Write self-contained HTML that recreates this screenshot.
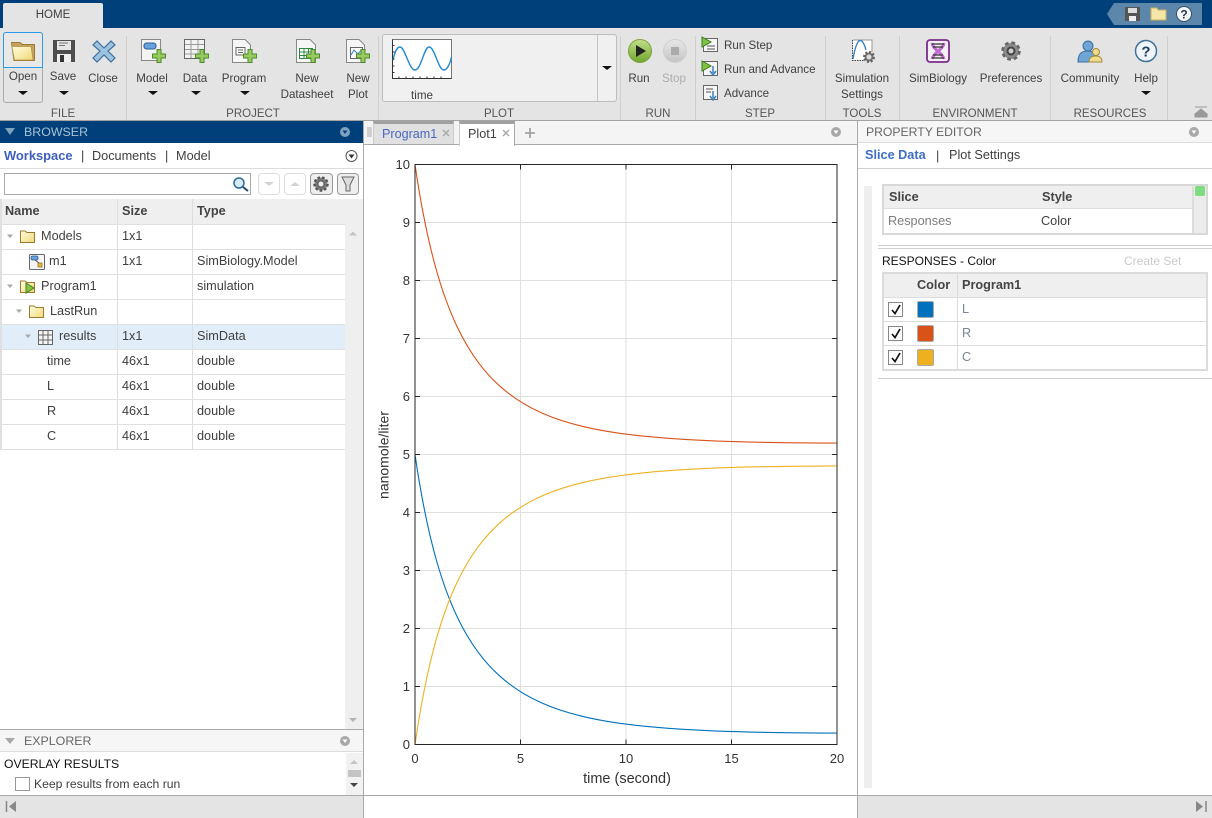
<!DOCTYPE html>
<html><head><meta charset="utf-8"><style>
html,body{margin:0;padding:0;background:#fff}
#p{position:relative;width:1212px;height:818px;overflow:hidden;font-family:"Liberation Sans",sans-serif;font-size:12px;color:#404040;background:#fff}
.b{position:absolute;box-sizing:border-box}
.t{position:absolute;white-space:nowrap;line-height:14px;font-size:11.6px}
.c{transform:translateX(-50%)}
.m{font-size:12.7px}
.h{font-size:12.7px;font-weight:bold;color:#444}
.s{font-size:11.5px;color:#555}
svg{position:absolute;left:0;top:0}
</style></head><body><div id="p">

<div class="b" style="left:0;top:0;width:1212px;height:28px;background:#00407a"></div>
<div class="b" style="left:3px;top:3px;width:100px;height:25px;background:#e4e4e4;border-radius:2px 2px 0 0"></div>
<div class="t c" style="left:53px;top:8px;font-size:11.5px">HOME</div>
<div class="b" style="left:0;top:28px;width:1212px;height:92px;background:#e4e4e4"></div>
<div class="b" style="left:0;top:120px;width:1212px;height:1px;background:#a3a3a3"></div>

<div class="b" style="left:3px;top:32px;width:40px;height:71px;border:1px solid #aaa;border-radius:3px"></div>
<div class="b" style="left:3px;top:32px;width:40px;height:36px;border:1px solid #2a9be8;border-radius:3px 3px 0 0;background:#e8e8e8"></div>
<div class="b" style="left:382px;top:34px;width:235px;height:68px;background:#f0f0f0;border:1px solid #bdbdbd;border-radius:3px"></div>
<div class="b" style="left:597px;top:35px;width:1px;height:66px;background:#c4c4c4"></div>

<div class="b" style="left:126px;top:36px;width:1px;height:84px;background:#cfcfcf"></div>
<div class="b" style="left:378px;top:36px;width:1px;height:84px;background:#cfcfcf"></div>
<div class="b" style="left:620px;top:36px;width:1px;height:84px;background:#cfcfcf"></div>
<div class="b" style="left:695px;top:36px;width:1px;height:84px;background:#cfcfcf"></div>
<div class="b" style="left:825px;top:36px;width:1px;height:84px;background:#cfcfcf"></div>
<div class="b" style="left:899px;top:36px;width:1px;height:84px;background:#cfcfcf"></div>
<div class="b" style="left:1050px;top:36px;width:1px;height:84px;background:#cfcfcf"></div>
<div class="b" style="left:1167px;top:36px;width:1px;height:84px;background:#cfcfcf"></div>

<div class="t c" style="left:23px;top:70px">Open</div>
<div class="t c" style="left:63px;top:70px">Save</div>
<div class="t c" style="left:103px;top:72px">Close</div>
<div class="t c" style="left:152px;top:72px">Model</div>
<div class="t c" style="left:195px;top:72px">Data</div>
<div class="t c" style="left:244px;top:72px">Program</div>
<div class="t c" style="left:307px;top:72px">New</div>
<div class="t c" style="left:307px;top:88px">Datasheet</div>
<div class="t c" style="left:358px;top:72px">New</div>
<div class="t c" style="left:358px;top:88px">Plot</div>
<div class="t c" style="left:422px;top:89px">time</div>
<div class="t c" style="left:639px;top:72px">Run</div>
<div class="t c" style="left:674px;top:72px;color:#adadad">Stop</div>
<div class="t" style="left:724px;top:39px">Run Step</div>
<div class="t" style="left:724px;top:63px">Run and Advance</div>
<div class="t" style="left:724px;top:87px">Advance</div>
<div class="t c" style="left:862px;top:72px">Simulation</div>
<div class="t c" style="left:862px;top:88px">Settings</div>
<div class="t c" style="left:938px;top:72px">SimBiology</div>
<div class="t c" style="left:1011px;top:72px">Preferences</div>
<div class="t c" style="left:1090px;top:72px">Community</div>
<div class="t c" style="left:1146px;top:72px">Help</div>

<div class="t c s" style="left:63px;top:107px">FILE</div>
<div class="t c s" style="left:253px;top:107px">PROJECT</div>
<div class="t c s" style="left:499px;top:107px">PLOT</div>
<div class="t c s" style="left:658px;top:107px">RUN</div>
<div class="t c s" style="left:760px;top:107px">STEP</div>
<div class="t c s" style="left:862px;top:107px">TOOLS</div>
<div class="t c s" style="left:975px;top:107px">ENVIRONMENT</div>
<div class="t c s" style="left:1110px;top:107px">RESOURCES</div>

<div class="b" style="left:0;top:121px;width:363px;height:22px;background:#00407a"></div>
<div class="t" style="left:24px;top:125px;color:#a8c2d6;font-size:12.4px">BROWSER</div>
<div class="t m" style="left:4px;top:149px;font-weight:bold;color:#3f5fbf;font-size:12.9px">Workspace</div>
<div class="t m" style="left:81px;top:149px">|</div>
<div class="t m" style="left:92px;top:149px">Documents</div>
<div class="t m" style="left:165px;top:149px">|</div>
<div class="t m" style="left:176px;top:149px">Model</div>
<div class="b" style="left:0;top:168px;width:363px;height:1px;background:#dcdcdc"></div>
<div class="b" style="left:4px;top:173px;width:247px;height:22px;border:1px solid #aaa;background:#fff"></div>
<div class="b" style="left:258px;top:173px;width:22px;height:22px;border:1px solid #ddd;border-radius:4px"></div>
<div class="b" style="left:284px;top:173px;width:22px;height:22px;border:1px solid #ddd;border-radius:4px"></div>
<div class="b" style="left:310px;top:173px;width:23px;height:22px;border:1px solid #999;border-radius:4px;background:#eee"></div>
<div class="b" style="left:337px;top:173px;width:22px;height:22px;border:1px solid #999;border-radius:4px;background:#eee"></div>

<div class="b" style="left:345px;top:199px;width:18px;height:530px;background:#efefef"></div>
<div class="b" style="left:1px;top:199px;width:344px;height:25px;background:#efefef"></div>
<div class="b" style="left:1px;top:325px;width:344px;height:24px;background:#e1eefa"></div>
<div class="b" style="left:0;top:199px;width:2px;height:251px;background:#e0e0e0"></div>
<div class="b" style="left:117px;top:199px;width:1px;height:251px;background:#dedede"></div>
<div class="b" style="left:192px;top:199px;width:1px;height:251px;background:#dedede"></div>
<div class="b" style="left:1px;top:224px;width:344px;height:1px;background:#e0e0e0"></div>
<div class="b" style="left:1px;top:249px;width:344px;height:1px;background:#e0e0e0"></div>
<div class="b" style="left:1px;top:274px;width:344px;height:1px;background:#e0e0e0"></div>
<div class="b" style="left:1px;top:299px;width:344px;height:1px;background:#e0e0e0"></div>
<div class="b" style="left:1px;top:324px;width:344px;height:1px;background:#e0e0e0"></div>
<div class="b" style="left:1px;top:349px;width:344px;height:1px;background:#e0e0e0"></div>
<div class="b" style="left:1px;top:374px;width:344px;height:1px;background:#e0e0e0"></div>
<div class="b" style="left:1px;top:399px;width:344px;height:1px;background:#e0e0e0"></div>
<div class="b" style="left:1px;top:424px;width:344px;height:1px;background:#e0e0e0"></div>
<div class="b" style="left:1px;top:449px;width:344px;height:1px;background:#e0e0e0"></div>

<div class="t h" style="left:5px;top:204px">Name</div>
<div class="t h" style="left:122px;top:204px">Size</div>
<div class="t h" style="left:197px;top:204px">Type</div>
<div class="t m" style="left:41px;top:229px">Models</div><div class="t m" style="left:122px;top:229px">1x1</div>
<div class="t m" style="left:49px;top:254px">m1</div><div class="t m" style="left:122px;top:254px">1x1</div><div class="t m" style="left:197px;top:254px">SimBiology.Model</div>
<div class="t m" style="left:41px;top:279px">Program1</div><div class="t m" style="left:197px;top:279px">simulation</div>
<div class="t m" style="left:50px;top:304px">LastRun</div>
<div class="t m" style="left:59px;top:329px">results</div><div class="t m" style="left:122px;top:329px">1x1</div><div class="t m" style="left:197px;top:329px">SimData</div>
<div class="t m" style="left:47px;top:354px">time</div><div class="t m" style="left:122px;top:354px">46x1</div><div class="t m" style="left:197px;top:354px">double</div>
<div class="t m" style="left:47px;top:379px">L</div><div class="t m" style="left:122px;top:379px">46x1</div><div class="t m" style="left:197px;top:379px">double</div>
<div class="t m" style="left:47px;top:404px">R</div><div class="t m" style="left:122px;top:404px">46x1</div><div class="t m" style="left:197px;top:404px">double</div>
<div class="t m" style="left:47px;top:429px">C</div><div class="t m" style="left:122px;top:429px">46x1</div><div class="t m" style="left:197px;top:429px">double</div>

<div class="b" style="left:0;top:729px;width:363px;height:1px;background:#aaa"></div>
<div class="b" style="left:0;top:730px;width:363px;height:22px;background:#f6f6f6;border-bottom:1px solid #dcdcdc"></div>
<div class="t" style="left:24px;top:734px;color:#666;font-size:12.4px">EXPLORER</div>
<div class="t" style="left:4px;top:757px;color:#111;font-size:12.2px">OVERLAY RESULTS</div>
<div class="b" style="left:15px;top:777px;width:15px;height:14px;border:1px solid #999;background:#fff"></div>
<div class="t" style="left:34px;top:777px;font-size:12.2px">Keep results from each run</div>
<div class="b" style="left:346px;top:753px;width:17px;height:42px;background:#f2f2f2"></div>
<div class="b" style="left:348px;top:770px;width:13px;height:7px;background:#c4c4c4"></div>

<div class="b" style="left:0;top:795px;width:1212px;height:1px;background:#aaa"></div>
<div class="b" style="left:0;top:796px;width:363px;height:22px;background:#e4e4e4"></div>
<div class="b" style="left:858px;top:796px;width:354px;height:22px;background:#e4e4e4"></div>
<div class="b" style="left:363px;top:121px;width:1px;height:697px;background:#aaa"></div>
<div class="b" style="left:857px;top:121px;width:1px;height:697px;background:#aaa"></div>

<div class="b" style="left:364px;top:121px;width:493px;height:24px;background:#f4f4f4"></div>
<div class="b" style="left:373px;top:121px;width:81px;height:24px;background:#e0e0e0;border-top:3px solid #a0a0a0;border-left:1px solid #ccc;border-right:1px solid #ccc"></div>
<div class="b" style="left:364px;top:144px;width:493px;height:1px;background:#aaa"></div>
<div class="b" style="left:459px;top:121px;width:56px;height:25px;background:#fff;border-top:3px solid #a0a0a0;border-left:1px solid #ccc;border-right:1px solid #aaa"></div>
<div class="t" style="left:382px;top:127px;color:#4a66c4;font-size:12.6px">Program1</div>
<div class="t" style="left:468px;top:127px;font-size:12.6px">Plot1</div>

<div class="b" style="left:858px;top:121px;width:354px;height:22px;background:#f6f6f6;border-bottom:1px solid #dcdcdc"></div>
<div class="t" style="left:866px;top:125px;color:#666;font-size:12.2px">PROPERTY EDITOR</div>
<div class="t m" style="left:865px;top:148px;font-weight:bold;color:#3f6fc4">Slice Data</div>
<div class="t m" style="left:936px;top:149px">|</div>
<div class="t m" style="left:949px;top:148px">Plot Settings</div>
<div class="b" style="left:858px;top:168px;width:354px;height:1px;background:#cfcfcf"></div>
<div class="b" style="left:864px;top:186px;width:8px;height:602px;background:#eeeeee"></div>

<div class="b" style="left:882px;top:184px;width:326px;height:51px;border:2px solid #d8d8d8;background:#fff"></div>
<div class="b" style="left:884px;top:186px;width:308px;height:23px;background:#efefef;border-bottom:1px solid #ddd"></div>
<div class="b" style="left:1192px;top:186px;width:14px;height:47px;background:#ececec;border-left:2px solid #ddd"></div>
<div class="b" style="left:1195px;top:186px;width:10px;height:10px;background:#7fdc7f;border-radius:2px"></div>
<div class="t h" style="left:889px;top:190px">Slice</div>
<div class="t h" style="left:1042px;top:190px">Style</div>
<div class="t m" style="left:888px;top:214px;color:#7d7d7d">Responses</div>
<div class="t m" style="left:1041px;top:214px">Color</div>

<div class="b" style="left:878px;top:245px;width:334px;height:1px;background:#cfcfcf"></div>
<div class="b" style="left:878px;top:248px;width:334px;height:1px;background:#cfcfcf"></div>
<div class="t" style="left:882px;top:254px;color:#111;font-size:12px">RESPONSES - Color</div>
<div class="t" style="left:1124px;top:254px;color:#cbcbcb;font-size:12px">Create Set</div>

<div class="b" style="left:882px;top:272px;width:326px;height:99px;border:2px solid #dcdcdc;background:#fff"></div>
<div class="b" style="left:884px;top:274px;width:322px;height:24px;background:#efefef"></div>
<div class="b" style="left:884px;top:297px;width:322px;height:1px;background:#ddd"></div>
<div class="b" style="left:884px;top:321px;width:322px;height:1px;background:#ddd"></div>
<div class="b" style="left:884px;top:345px;width:322px;height:1px;background:#ddd"></div>
<div class="b" style="left:957px;top:274px;width:1px;height:95px;background:#ddd"></div>
<div class="t h" style="left:917px;top:278px">Color</div>
<div class="t h" style="left:962px;top:278px">Program1</div>
<div class="t m" style="left:962px;top:302px;color:#7a8794">L</div>
<div class="t m" style="left:962px;top:326px;color:#7a8794">R</div>
<div class="t m" style="left:962px;top:350px;color:#7a8794">C</div>
<div class="b" style="left:917px;top:301px;width:17px;height:17px;background:#0072bd;border:1px solid #aaa;border-radius:2px"></div>
<div class="b" style="left:917px;top:325px;width:17px;height:17px;background:#d95319;border:1px solid #aaa;border-radius:2px"></div>
<div class="b" style="left:917px;top:349px;width:17px;height:17px;background:#edb120;border:1px solid #aaa;border-radius:2px"></div>
<div class="b" style="left:888px;top:302px;width:15px;height:15px;border:1px solid #888;background:#fff"></div>
<div class="b" style="left:888px;top:326px;width:15px;height:15px;border:1px solid #888;background:#fff"></div>
<div class="b" style="left:888px;top:350px;width:15px;height:15px;border:1px solid #888;background:#fff"></div>
<div class="b" style="left:878px;top:378px;width:334px;height:1px;background:#cfcfcf"></div>

<svg width="1212" height="818" viewBox="0 0 1212 818">
<defs>
<linearGradient id="fy" x1="0" y1="0" x2="1" y2="1"><stop offset="0" stop-color="#fffde0"/><stop offset="1" stop-color="#f0d878"/></linearGradient>
<linearGradient id="gb" x1="0" y1="0" x2="0" y2="1"><stop offset="0" stop-color="#c3e08a"/><stop offset="1" stop-color="#6ea52c"/></linearGradient>
<linearGradient id="sl" x1="0" y1="0" x2="0" y2="1"><stop offset="0" stop-color="#e8e8e8"/><stop offset="1" stop-color="#c4c4c4"/></linearGradient>
<path id="pl" d="M0 4.500H4.500V0H8.500V4.500H13V8.500H8.500V13H4.500V8.500H0Z" fill="#97cb5e" stroke="#4c8a2b" stroke-width="1"/>
<path id="ar" d="M-5 0H5L0 4Z" fill="#111"/>
<path id="gt" d="M-5 0H5L0 6Z" fill="#aaa"/>
<path id="fo" d="M0.500 13.500V2H5L7 3.500H14.500V13.500Z" fill="url(#fy)" stroke="#9c7a2c"/>
<path id="cv" fill="none" d="M415 -279.200C422.030 -230.900 429.070 -199.600 436.100 -174.600C443.130 -149.600 450.170 -131.600 457.200 -116.800C464.230 -102 471.270 -90.700 478.300 -81.300C485.330 -71.900 492.370 -64.350 499.400 -58C513.470 -45.300 527.530 -37.100 541.600 -30.800C555.670 -24.500 569.730 -20.300 583.800 -17C611.930 -10.360 640.070 -7.440 668.200 -5.400C724.470 -1.320 780.730 -1 837 -0.570"/>
</defs>

<!-- quick access -->
<path d="M1107 14 1114 3H1202V25H1114Z" fill="#5c86aa"/>
<path d="M1125 7H1140V21H1125Z" fill="#555"/><path d="M1128 8H1137V13H1128Z" fill="#ddd"/><path d="M1129 16H1136V21H1129Z" fill="#eee"/>
<path d="M1151 8H1157L1158 10H1166V20H1151Z" fill="#f6e6a8" stroke="#c8b060"/>
<circle cx="1184" cy="14" r="7.500" fill="#f4f6f8" stroke="#33506b"/><text x="1184" y="18.500" text-anchor="middle" font-family="Liberation Sans" font-weight="bold" font-size="12" fill="#1d3850">?</text>

<!-- Open -->
<path d="M11.500 42.500H20L22.500 44.500H34.500V60.500H14Z" fill="#c4a25c" stroke="#9a7b30"/>
<path d="M12 46.500H31L33 60H14.500Z" fill="url(#fy)" stroke="#b4934a" stroke-width=".7"/>
<use href="#ar" x="23" y="91"/>
<!-- Save -->
<path d="M53 40H75V62H53Z" fill="#4d4d4d"/><path d="M57 41H71V50H57Z" fill="#e6e6e6"/><path d="M59 43H68M59 45.500H65" stroke="#777"/><path d="M57 54H71V62H57Z" fill="#efefef"/><path d="M60 55H64V62H60Z" fill="#333"/>
<use href="#ar" x="64" y="91"/>
<!-- Close -->
<path d="M97 41 104 48 111 41 115 45 108 51 115 58 111 62 104 55 97 62 93 58 100 51 93 45Z" fill="#9cc3e0" stroke="#3f6f9c" stroke-width="1.200"/>
<!-- Model -->
<path d="M141.500 39.500H160.500V60.500H141.500Z" fill="#f4f4f4" stroke="#888"/>
<rect x="144" y="43" width="12" height="6" rx="2.500" fill="#66a3dd" stroke="#2b5d8d"/>
<use href="#pl" x="152.500" y="49.500"/><use href="#ar" x="153" y="91"/>
<!-- Data -->
<path d="M184.500 39.500H204.500V58.500H184.500Z" fill="#f2f2f2" stroke="#666"/><path d="M185 44.500H204M185 49.500H204M185 54H204M191 40V58M198 40V58" stroke="#9a9a9a"/>
<use href="#pl" x="195.500" y="49.500"/><use href="#ar" x="196" y="91"/>
<!-- Program -->
<path d="M232.500 39.500H245L250.500 45V62.500H232.500Z" fill="#f6f6f6" stroke="#888"/><path d="M236 47.500H245V55H236Z" fill="#fff" stroke="#666"/><path d="M238 50H243M238 52.500H243" stroke="#666"/>
<use href="#pl" x="243.500" y="49.500"/><use href="#ar" x="245" y="91"/>
<!-- Datasheet -->
<path d="M296.500 39.500H310L315.500 45V62.500H296.500Z" fill="#f6f6f6" stroke="#888"/><path d="M299.500 48.500H312.500V58.500H299.500ZM299.500 52H312.500M299.500 55.500H312.500M304 49V58M308.500 49V58" fill="#fff" stroke="#2d8a3c"/>
<use href="#pl" x="306.500" y="49.500"/>
<!-- New Plot -->
<path d="M346.500 39.500H359L364.500 45V62.500H346.500Z" fill="#f6f6f6" stroke="#888"/><path d="M350.500 47.500H362.500V58.500H350.500Z" fill="#fff" stroke="#666"/><path d="M351 55 354 50 358 54 362 49" fill="none" stroke="#2a7fc4"/>
<use href="#pl" x="356.500" y="49.500"/>

<!-- thumbnail -->
<path d="M392.500 78.500V39.500H451.500V78.500Z" fill="#fff" stroke="#777"/>
<path d="M392.500 39.500V78.500H451.500" fill="none" stroke="#333"/>
<path d="M393 60C395 51 397 47 400 47 405 47 409 70 415 70 421 70 424 47 429 47 435 47 438 70 444 70 447 70 450 64 451.500 57" fill="none" stroke="#1f8ad0" stroke-width="1.400"/>
<path d="M392.500 45.500h2M392.500 52h2M392.500 59h2M392.500 66h2M392.500 72.500h2M399 78.500v-2M406 78.500v-2M413 78.500v-2M420 78.500v-2M427 78.500v-2M434 78.500v-2M441 78.500v-2" stroke="#333"/>
<use href="#ar" x="607" y="66"/>

<!-- run -->
<circle cx="640" cy="51" r="11.500" fill="url(#gb)" stroke="#7da23f"/><path d="M636 45 646 51 636 57Z" fill="#222"/>
<circle cx="675" cy="51" r="11.500" fill="url(#sl)" stroke="#cfcfcf"/><rect x="671" y="47" width="8" height="8" fill="#aaa"/>

<!-- steps -->
<path d="M703.500 38.500H717.500V51.500H703.500Z" fill="#f5f5f5" stroke="#666"/><path d="M707 46H715M707 49H715" stroke="#555"/><path d="M702 37 711 42 702 47Z" fill="#7ec242" stroke="#3c7a20"/>
<path d="M703.500 61.500H717.500V75.500H703.500Z" fill="#f5f5f5" stroke="#666"/><path d="M702 61 711 66 702 71Z" fill="#7ec242" stroke="#3c7a20"/><path d="M713 66V73M710 71 713 75 716 71" fill="none" stroke="#3b82bd" stroke-width="1.500"/>
<path d="M703.500 85.500H717.500V99.500H703.500Z" fill="#f5f5f5" stroke="#666"/><path d="M706 89H713M706 92H711" stroke="#555"/><path d="M713 91V98M710 96 713 100 716 96" fill="none" stroke="#3b82bd" stroke-width="1.500"/>

<!-- sim settings -->
<path d="M853 40H872V52L864 60H853Z" fill="#fff"/>
<path d="M853 40H872V52" fill="none" stroke="#999"/>
<path d="M853 59C857 36 862 36 866 50" fill="none" stroke="#2a7fc4" stroke-width="1.300"/>
<path d="M852.500 40V60.500H864" fill="none" stroke="#444" stroke-dasharray="1.500 1"/>
<circle cx="869" cy="57" r="4.500" fill="#777" stroke="#666" stroke-width="3" stroke-dasharray="2 1.500"/><circle cx="869" cy="57" r="2.500" fill="#ddd"/>

<!-- SimBiology -->
<rect x="927" y="40" width="22" height="22" rx="3" fill="#f6eef8" stroke="#7a2d8a" stroke-width="1.800"/>
<path d="M932 43C933 50 942 52 944 59M944 43C943 50 934 52 932 59" fill="none" stroke="#c06bd0" stroke-width="3"/>
<path d="M932 44H944M933 47H943M933 55H943M932 58H944" stroke="#333" stroke-width="1.200"/>

<!-- Preferences gear -->
<circle cx="1011" cy="51" r="8" fill="#8a8a8a" stroke="#666" stroke-width="3.500" stroke-dasharray="3.500 2.800"/>
<circle cx="1011" cy="51" r="7" fill="#8c8c8c"/><circle cx="1011" cy="51" r="4.500" fill="#444"/><circle cx="1011" cy="51" r="2.500" fill="#cfcfcf"/>

<!-- Community -->
<circle cx="1088" cy="46" r="5" fill="#6ea5d6" stroke="#3d6f9c"/><path d="M1078 62C1078 53 1082 51 1088 51 1092 51 1096 53 1096 58V62Z" fill="#6ea5d6" stroke="#3d6f9c"/>
<circle cx="1096" cy="52" r="3.500" fill="#f0dc8c" stroke="#a08a3c"/><path d="M1089 62C1089 57 1092 56 1096 56 1100 56 1102 58 1102 62Z" fill="#f0dc8c" stroke="#a08a3c"/>

<!-- Help -->
<circle cx="1146" cy="51" r="10.500" fill="#eef4f9" stroke="#3e7296" stroke-width="1.500"/><text x="1146" y="56.500" text-anchor="middle" font-family="Liberation Sans" font-weight="bold" font-size="15" fill="#1d3d5c">?</text>
<use href="#ar" x="1146" y="91"/>

<!-- collapse -->
<path d="M1195 107H1207M1201 109 1207 114H1195ZM1195 114H1207V117H1195Z" fill="#999" stroke="#999"/>

<!-- browser header -->
<path d="M5 128H15L10 135Z" fill="#7ea2c0"/>
<circle cx="345" cy="132" r="5" fill="#7ea2c0"/><path d="M342.500 130.500H347.500L345 134Z" fill="#00407a"/>
<circle cx="351.500" cy="156" r="5.500" fill="#fff" stroke="#555"/><path d="M348.500 154.500H354.500L351.500 158.500Z" fill="#333"/>

<!-- search -->
<circle cx="239" cy="183" r="5" fill="#d8ecf8" stroke="#2f6a95" stroke-width="1.500"/><path d="M243 187 248 191" stroke="#1d4a6d" stroke-width="2"/>
<path d="M264 182H274L269 186Z" fill="#d4d4d4"/><path d="M290 186H300L295 182Z" fill="#d4d4d4"/>
<circle cx="321" cy="184" r="6.500" fill="#888" stroke="#555" stroke-width="2.500" stroke-dasharray="2.500 2"/><circle cx="321" cy="184" r="4.500" fill="#666"/><circle cx="321" cy="184" r="2.500" fill="#eee"/>
<path d="M342 177H354L350 185V191H346V185Z" fill="#ddd" stroke="#666"/>

<!-- tree -->
<use href="#gt" transform="translate(10,234.500) scale(.6)"/>
<use href="#gt" transform="translate(10,284.500) scale(.6)"/>
<use href="#gt" transform="translate(19,309.500) scale(.6)"/>
<use href="#gt" transform="translate(28,334.500) scale(.6)"/>
<use href="#fo" x="20" y="229"/>
<use href="#fo" x="20" y="279"/>
<use href="#fo" x="29" y="304"/>
<path d="M26 283 34 288 26 293Z" fill="#86c440" stroke="#447f22"/>
<rect x="29.500" y="254.500" width="15" height="15" rx="1" fill="#f4f4f4" stroke="#666"/><rect x="31" y="256" width="7" height="4" rx="1.500" fill="#66a3dd" stroke="#2b5d8d" stroke-width=".7"/><rect x="38" y="263" width="4" height="4" fill="#e5b93c" stroke="#8a6a15" stroke-width=".7"/><path d="M35 260 39 263" stroke="#555"/>
<path d="M38.500 330.500H52.500V344.500H38.500ZM38.500 335H52.500M38.500 340H52.500M43 331V344M48 331V344" fill="#f4f4f4" stroke="#666"/>

<!-- scroll arrows -->
<path d="M349 235.500H357L353 231.500Z" fill="#c4c4c4"/><path d="M349 718H357L353 722Z" fill="#b4b4b4"/>
<!-- explorer -->
<path d="M5 738H15L10 744Z" fill="#a8a8a8"/>
<circle cx="345" cy="741" r="5" fill="#a8a8a8"/><path d="M342.500 739.500H347.500L345 743Z" fill="#fff"/>
<path d="M350 764H358L354 760Z" fill="#c4c4c4"/><path d="M350 783H358L354 787Z" fill="#444"/>
<!-- bottom bar -->
<path d="M6.500 801V812" stroke="#888" stroke-width="1.500"/><path d="M16 801V812L9 806.500Z" fill="#888"/>
<path d="M1206 801V812" stroke="#888" stroke-width="1.500"/><path d="M1196 801V812L1203 806.500Z" fill="#888"/>
<!-- doc tabs -->
<path d="M367 128H372M367 130H372M367 132H372M367 134H372M367 136H372" stroke="#aaa"/>
<path d="M443 130 449 136M449 130 443 136M503 130 509 136M509 130 503 136" stroke="#aaa" stroke-width="1.500"/>
<path d="M525 133H535M530 128V138" stroke="#999" stroke-width="1.600"/>
<circle cx="836" cy="132" r="5" fill="#a8a8a8"/><path d="M833.500 130.500H838.500L836 134Z" fill="#fff"/>
<circle cx="1194" cy="132" r="5" fill="#a8a8a8"/><path d="M1191.500 130.500H1196.500L1194 134Z" fill="#fff"/>
<!-- checks -->
<path d="M892 310 895 313.500 900 305M892 334 895 337.500 900 329M892 358 895 361.500 900 353" fill="none" stroke="#111" stroke-width="1.700"/>

<!-- plot -->
<path d="M520.500 164.500V744.500M626 164.500V744.500M731.500 164.500V744.500M415 222.500H837M415 280.500H837M415 338.500H837M415 396.500H837M415 454.500H837M415 512.500H837M415 570.500H837M415 628.500H837M415 686.500H837" stroke="#dfdfdf"/>
<g stroke-width="1.100" fill="none">
<use href="#cv" stroke="#0072bd" transform="translate(0,733.700)"/>
<use href="#cv" stroke="#d95319" transform="translate(0,443.700)"/>
<use href="#cv" stroke="#edb120" transform="translate(0,465.300) scale(1,-1)"/>
</g>
<rect x="415" y="164.500" width="422" height="580" fill="none" stroke="#262626"/>
<path d="M520.500 744.500v-5M626 744.500v-5M731.500 744.500v-5M520.500 164.500v5M626 164.500v5M731.500 164.500v5M415 222.500h5M415 280.500h5M415 338.500h5M415 396.500h5M415 454.500h5M415 512.500h5M415 570.500h5M415 628.500h5M415 686.500h5M837 222.500h-5M837 280.500h-5M837 338.500h-5M837 396.500h-5M837 454.500h-5M837 512.500h-5M837 570.500h-5M837 628.500h-5M837 686.500h-5" stroke="#262626"/>
<g font-family="Liberation Sans" font-size="13" fill="#333" text-anchor="end">
<text x="410" y="169">10</text><text x="410" y="227">9</text><text x="410" y="285">8</text><text x="410" y="343">7</text><text x="410" y="401">6</text><text x="410" y="459">5</text><text x="410" y="517">4</text><text x="410" y="575">3</text><text x="410" y="633">2</text><text x="410" y="691">1</text><text x="410" y="749">0</text>
</g>
<g font-family="Liberation Sans" font-size="13" fill="#333" text-anchor="middle">
<text x="415" y="763">0</text><text x="520.500" y="763">5</text><text x="626" y="763">10</text><text x="731.500" y="763">15</text><text x="837" y="763">20</text>
</g>
<text x="627" y="783" text-anchor="middle" font-family="Liberation Sans" font-size="14.500" fill="#333">time (second)</text>
<text transform="translate(388.500,455) rotate(-90)" text-anchor="middle" font-family="Liberation Sans" font-size="14" fill="#333">nanomole/liter</text>
</svg>
</div></body></html>
